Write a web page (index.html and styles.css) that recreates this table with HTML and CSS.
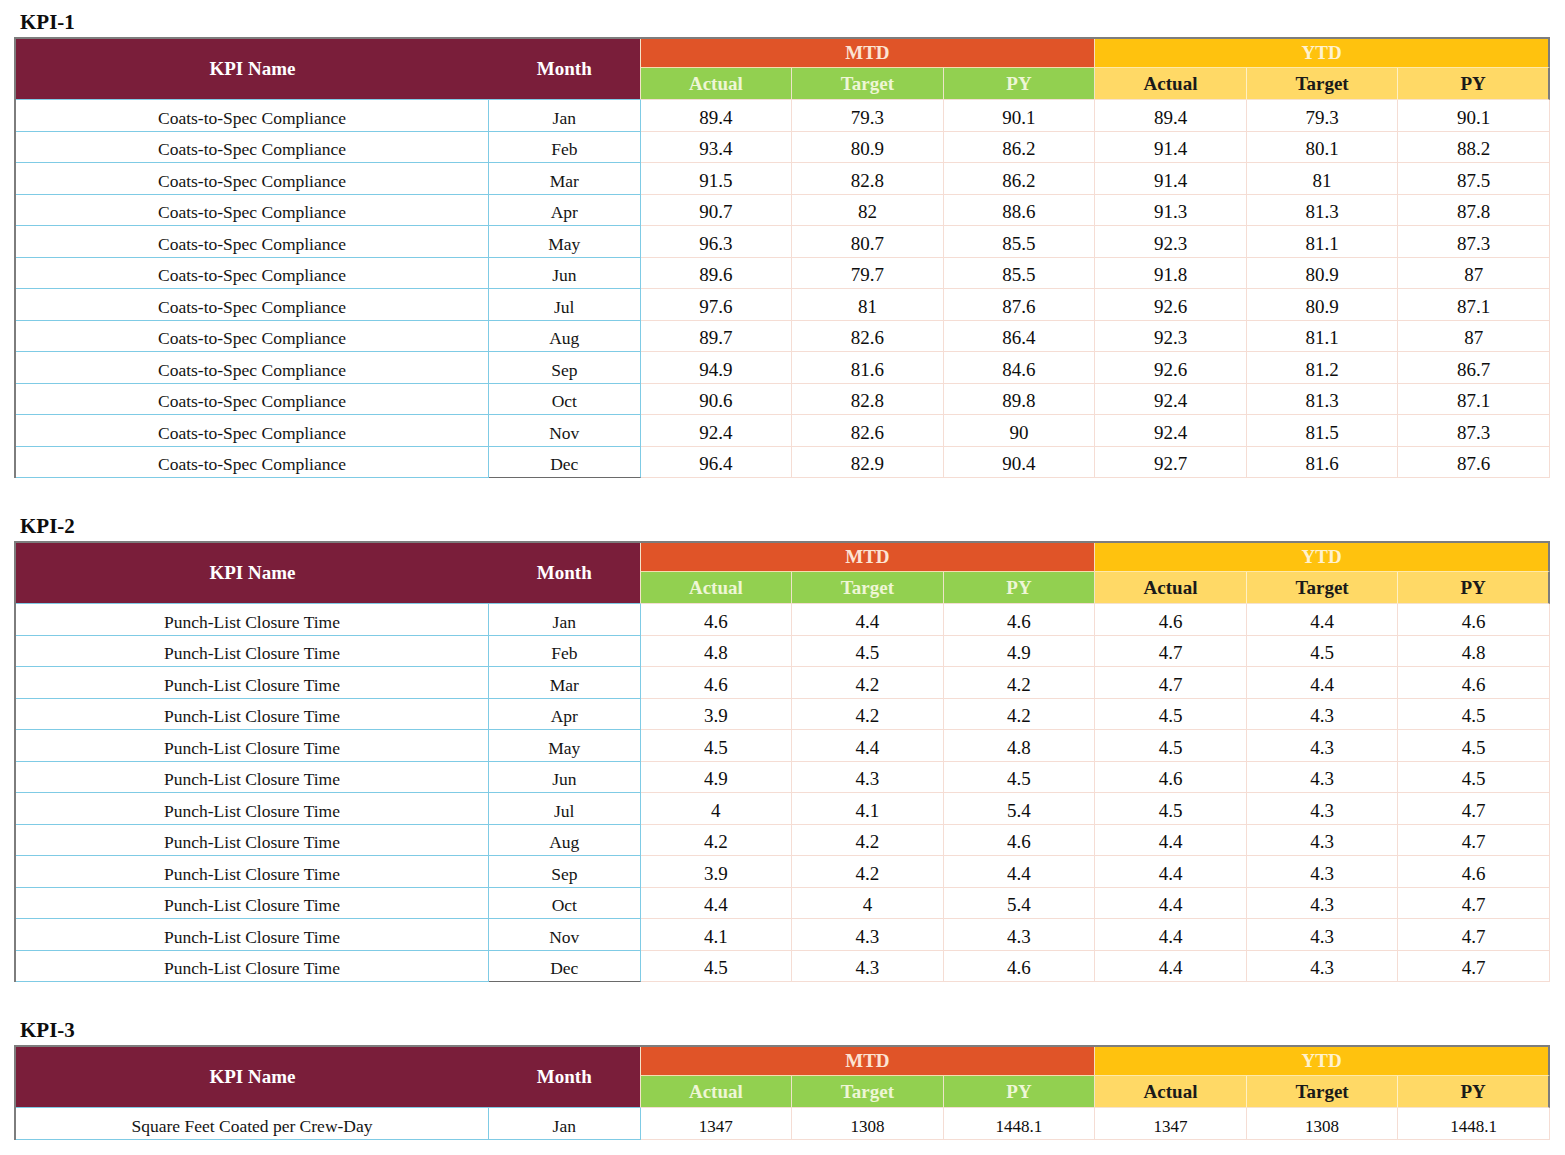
FILE: index.html
```html
<!DOCTYPE html>
<html>
<head>
<meta charset="utf-8">
<link rel="stylesheet" href="styles.css">
</head>
<body>
<div class="page">

<section class="kpi">
<div class="title">KPI-1</div>
<table class="grid">
<colgroup><col class="c-name"><col><col><col><col><col><col><col></colgroup>
<thead>
<tr class="h1"><th class="hname" rowspan="2">KPI Name</th><th class="hmonth" rowspan="2">Month</th><th class="hmtd" colspan="3">MTD</th><th class="hytd" colspan="3">YTD</th></tr>
<tr class="h2"><th class="g">Actual</th><th class="g">Target</th><th class="g">PY</th><th class="y">Actual</th><th class="y">Target</th><th class="y last">PY</th></tr>
</thead>
<tbody>
<tr class="d"><td class="n">Coats-to-Spec Compliance</td><td class="m">Jan</td><td class="v">89.4</td><td class="v">79.3</td><td class="v">90.1</td><td class="v">89.4</td><td class="v">79.3</td><td class="v">90.1</td></tr>
<tr class="d"><td class="n">Coats-to-Spec Compliance</td><td class="m">Feb</td><td class="v">93.4</td><td class="v">80.9</td><td class="v">86.2</td><td class="v">91.4</td><td class="v">80.1</td><td class="v">88.2</td></tr>
<tr class="d"><td class="n">Coats-to-Spec Compliance</td><td class="m">Mar</td><td class="v">91.5</td><td class="v">82.8</td><td class="v">86.2</td><td class="v">91.4</td><td class="v">81</td><td class="v">87.5</td></tr>
<tr class="d"><td class="n">Coats-to-Spec Compliance</td><td class="m">Apr</td><td class="v">90.7</td><td class="v">82</td><td class="v">88.6</td><td class="v">91.3</td><td class="v">81.3</td><td class="v">87.8</td></tr>
<tr class="d"><td class="n">Coats-to-Spec Compliance</td><td class="m">May</td><td class="v">96.3</td><td class="v">80.7</td><td class="v">85.5</td><td class="v">92.3</td><td class="v">81.1</td><td class="v">87.3</td></tr>
<tr class="d"><td class="n">Coats-to-Spec Compliance</td><td class="m">Jun</td><td class="v">89.6</td><td class="v">79.7</td><td class="v">85.5</td><td class="v">91.8</td><td class="v">80.9</td><td class="v">87</td></tr>
<tr class="d"><td class="n">Coats-to-Spec Compliance</td><td class="m">Jul</td><td class="v">97.6</td><td class="v">81</td><td class="v">87.6</td><td class="v">92.6</td><td class="v">80.9</td><td class="v">87.1</td></tr>
<tr class="d"><td class="n">Coats-to-Spec Compliance</td><td class="m">Aug</td><td class="v">89.7</td><td class="v">82.6</td><td class="v">86.4</td><td class="v">92.3</td><td class="v">81.1</td><td class="v">87</td></tr>
<tr class="d"><td class="n">Coats-to-Spec Compliance</td><td class="m">Sep</td><td class="v">94.9</td><td class="v">81.6</td><td class="v">84.6</td><td class="v">92.6</td><td class="v">81.2</td><td class="v">86.7</td></tr>
<tr class="d"><td class="n">Coats-to-Spec Compliance</td><td class="m">Oct</td><td class="v">90.6</td><td class="v">82.8</td><td class="v">89.8</td><td class="v">92.4</td><td class="v">81.3</td><td class="v">87.1</td></tr>
<tr class="d"><td class="n">Coats-to-Spec Compliance</td><td class="m">Nov</td><td class="v">92.4</td><td class="v">82.6</td><td class="v">90</td><td class="v">92.4</td><td class="v">81.5</td><td class="v">87.3</td></tr>
<tr class="d end"><td class="n">Coats-to-Spec Compliance</td><td class="m">Dec</td><td class="v">96.4</td><td class="v">82.9</td><td class="v">90.4</td><td class="v">92.7</td><td class="v">81.6</td><td class="v">87.6</td></tr>
</tbody>
</table>
</section>

<section class="kpi">
<div class="title">KPI-2</div>
<table class="grid">
<colgroup><col class="c-name"><col><col><col><col><col><col><col></colgroup>
<thead>
<tr class="h1"><th class="hname" rowspan="2">KPI Name</th><th class="hmonth" rowspan="2">Month</th><th class="hmtd" colspan="3">MTD</th><th class="hytd" colspan="3">YTD</th></tr>
<tr class="h2"><th class="g">Actual</th><th class="g">Target</th><th class="g">PY</th><th class="y">Actual</th><th class="y">Target</th><th class="y last">PY</th></tr>
</thead>
<tbody>
<tr class="d"><td class="n">Punch-List Closure Time</td><td class="m">Jan</td><td class="v">4.6</td><td class="v">4.4</td><td class="v">4.6</td><td class="v">4.6</td><td class="v">4.4</td><td class="v">4.6</td></tr>
<tr class="d"><td class="n">Punch-List Closure Time</td><td class="m">Feb</td><td class="v">4.8</td><td class="v">4.5</td><td class="v">4.9</td><td class="v">4.7</td><td class="v">4.5</td><td class="v">4.8</td></tr>
<tr class="d"><td class="n">Punch-List Closure Time</td><td class="m">Mar</td><td class="v">4.6</td><td class="v">4.2</td><td class="v">4.2</td><td class="v">4.7</td><td class="v">4.4</td><td class="v">4.6</td></tr>
<tr class="d"><td class="n">Punch-List Closure Time</td><td class="m">Apr</td><td class="v">3.9</td><td class="v">4.2</td><td class="v">4.2</td><td class="v">4.5</td><td class="v">4.3</td><td class="v">4.5</td></tr>
<tr class="d"><td class="n">Punch-List Closure Time</td><td class="m">May</td><td class="v">4.5</td><td class="v">4.4</td><td class="v">4.8</td><td class="v">4.5</td><td class="v">4.3</td><td class="v">4.5</td></tr>
<tr class="d"><td class="n">Punch-List Closure Time</td><td class="m">Jun</td><td class="v">4.9</td><td class="v">4.3</td><td class="v">4.5</td><td class="v">4.6</td><td class="v">4.3</td><td class="v">4.5</td></tr>
<tr class="d"><td class="n">Punch-List Closure Time</td><td class="m">Jul</td><td class="v">4</td><td class="v">4.1</td><td class="v">5.4</td><td class="v">4.5</td><td class="v">4.3</td><td class="v">4.7</td></tr>
<tr class="d"><td class="n">Punch-List Closure Time</td><td class="m">Aug</td><td class="v">4.2</td><td class="v">4.2</td><td class="v">4.6</td><td class="v">4.4</td><td class="v">4.3</td><td class="v">4.7</td></tr>
<tr class="d"><td class="n">Punch-List Closure Time</td><td class="m">Sep</td><td class="v">3.9</td><td class="v">4.2</td><td class="v">4.4</td><td class="v">4.4</td><td class="v">4.3</td><td class="v">4.6</td></tr>
<tr class="d"><td class="n">Punch-List Closure Time</td><td class="m">Oct</td><td class="v">4.4</td><td class="v">4</td><td class="v">5.4</td><td class="v">4.4</td><td class="v">4.3</td><td class="v">4.7</td></tr>
<tr class="d"><td class="n">Punch-List Closure Time</td><td class="m">Nov</td><td class="v">4.1</td><td class="v">4.3</td><td class="v">4.3</td><td class="v">4.4</td><td class="v">4.3</td><td class="v">4.7</td></tr>
<tr class="d end"><td class="n">Punch-List Closure Time</td><td class="m">Dec</td><td class="v">4.5</td><td class="v">4.3</td><td class="v">4.6</td><td class="v">4.4</td><td class="v">4.3</td><td class="v">4.7</td></tr>
</tbody>
</table>
</section>

<section class="kpi">
<div class="title">KPI-3</div>
<table class="grid">
<colgroup><col class="c-name"><col><col><col><col><col><col><col></colgroup>
<thead>
<tr class="h1"><th class="hname" rowspan="2">KPI Name</th><th class="hmonth" rowspan="2">Month</th><th class="hmtd" colspan="3">MTD</th><th class="hytd" colspan="3">YTD</th></tr>
<tr class="h2"><th class="g">Actual</th><th class="g">Target</th><th class="g">PY</th><th class="y">Actual</th><th class="y">Target</th><th class="y last">PY</th></tr>
</thead>
<tbody>
<tr class="d end small"><td class="n">Square Feet Coated per Crew-Day</td><td class="m blue">Jan</td><td class="v">1347</td><td class="v">1308</td><td class="v">1448.1</td><td class="v">1347</td><td class="v">1308</td><td class="v">1448.1</td></tr>
</tbody>
</table>
</section>

</div>
</body>
</html>
```

FILE: styles.css
```css
html, body {
  margin: 0;
  padding: 0;
  background: #ffffff;
}

body {
  font-family: "Liberation Serif", "Times New Roman", serif;
  color: #111111;
}

.page {
  width: 1565px;
  padding-left: 14px;
  box-sizing: border-box;
}

.kpi + .kpi {
  margin-top: 26px;
}

.title {
  height: 37px;
  box-sizing: border-box;
  padding-top: 11px;
  padding-left: 6px;
  font-size: 21px;
  line-height: 23px;
  font-weight: bold;
  color: #0d0d0d;
}

.grid {
  width: 1536px;
  table-layout: fixed;
  border-collapse: separate;
  border-spacing: 0;
  border-top: 2px solid #7d7d7d;
  border-left: 2px solid #7d7d7d;
}

.c-name {
  width: 473px;
}

.grid th,
.grid td {
  padding: 0;
  text-align: center;
  white-space: nowrap;
}

.grid th {
  font-weight: bold;
  font-size: 19px;
  vertical-align: middle;
}

.h1 {
  height: 29px;
}

.h2 {
  height: 32px;
}

.hname {
  background: #7a1e3a;
  color: #ffffff;
  border-bottom: 1px solid #7fcbe5;
}

.hmonth {
  background: #7a1e3a;
  color: #ffffff;
  border-right: 1px solid #f4e3c9;
  border-bottom: 1px solid #7fcbe5;
}

.hmtd {
  background: #e05428;
  color: #fce4d4;
  border-right: 1px solid #f6dcc0;
  border-bottom: 1px solid #f6dcb0;
}

.hytd {
  background: #ffc20e;
  color: #fff2cf;
  border-right: 2px solid #7d7d7d;
  border-bottom: 1px solid #ffe9a8;
}

.g {
  background: #92d050;
  color: #eef6d6;
  border-right: 1px solid #eee4c8;
  border-bottom: 1px solid #f3ddd3;
}

.y {
  background: #ffd966;
  color: #1a1a1a;
  border-right: 1px solid #fff0c4;
  border-bottom: 1px solid #f6e2cf;
}

.y.last {
  border-right: 2px solid #7d7d7d;
}

.d {
  height: 31.5px;
}

.grid td {
  vertical-align: bottom;
  padding-bottom: 2px;
}

.n,
.m {
  font-size: 17.5px;
  color: #141414;
  border-right: 1px solid #7fcbe5;
  border-bottom: 1px solid #7fcbe5;
}

.v {
  font-size: 19px;
  color: #0d0d0d;
  border-right: 1px solid #f5ddd4;
  border-bottom: 1px solid #f5ddd4;
}

.end .m {
  border-bottom-color: #6a6a6a;
}

.end .m.blue {
  border-bottom-color: #7fcbe5;
}

.small .v {
  font-size: 17px;
}
```
